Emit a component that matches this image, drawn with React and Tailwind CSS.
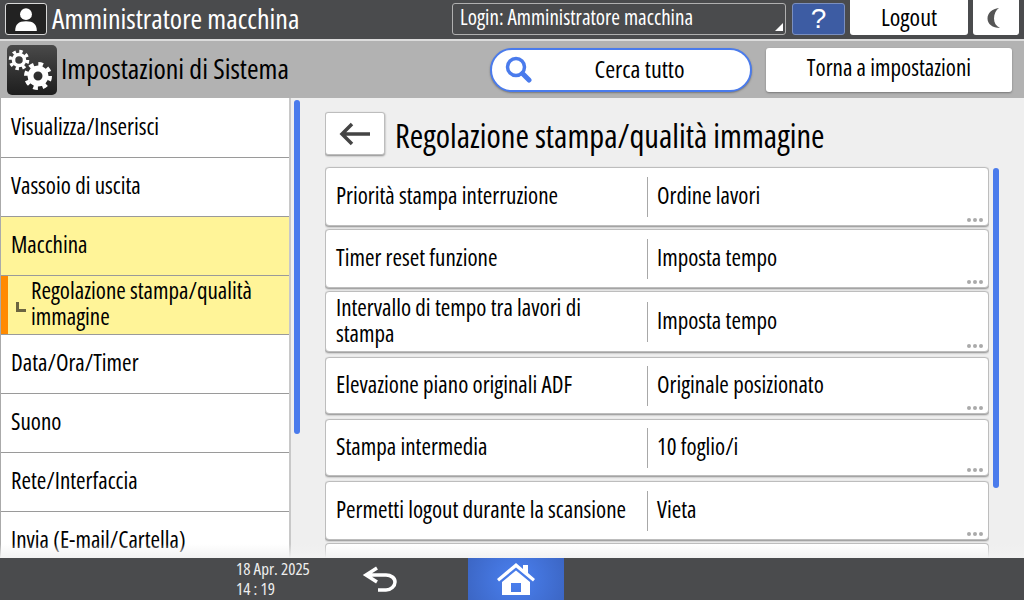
const font = "font-['Open_Sans',sans-serif] [font-stretch:condensed]";

const menuItems = [
  { label: "Visualizza/Inserisci" },
  { label: "Vassoio di uscita" },
  { label: "Macchina", active: true },
  { label: "Regolazione stampa/qualità immagine", sub: true },
  { label: "Data/Ora/Timer" },
  { label: "Suono" },
  { label: "Rete/Interfaccia" },
  { label: "Invia (E-mail/Cartella)" },
];

const settings = [
  { name: "Priorità stampa interruzione", value: "Ordine lavori", h: "h-[59px]" },
  { name: "Timer reset funzione", value: "Imposta tempo", h: "h-[59px]" },
  { name: "Intervallo di tempo tra lavori di stampa", value: "Imposta tempo", h: "h-[61px]", mb: "mb-[5px]" },
  { name: "Elevazione piano originali ADF", value: "Originale posizionato", h: "h-[57px]", mb: "mb-[5px]" },
  { name: "Stampa intermedia", value: "10 foglio/i", h: "h-[57px]", mb: "mb-[5px]" },
  { name: "Permetti logout durante la scansione", value: "Vieta", h: "h-[59px]" },
];

const GearsIcon = () => (
  <svg viewBox="0 0 50 50" className="w-[50px] h-[50px]">
    <circle cx="12" cy="15" r="5.500" fill="none" stroke="#fff" strokeWidth="3.500" />
    <circle cx="12" cy="15" r="8.500" fill="none" stroke="#fff" strokeWidth="3.500" strokeDasharray="3.340 3.340" />
    <circle cx="31" cy="31" r="7.500" fill="none" stroke="#fff" strokeWidth="6" />
    <circle cx="31" cy="31" r="12" fill="none" stroke="#fff" strokeWidth="4" strokeDasharray="4.710 4.710" />
  </svg>
);

const MenuRow = ({ item }) => {
  if (item.sub) {
    return (
      <div className="h-[59px] shrink-0 flex items-center bg-[#fff498] border-b border-[#9a9a9a] text-[23px] leading-[26px] text-black">
        <div className="w-[7px] h-full bg-[#ff8a00] shrink-0" />
        <svg viewBox="0 0 10 10" className="w-[10px] h-[10px] ml-[8px] mt-[4px] shrink-0">
          <path d="M1.500 0v8.500H10" fill="none" stroke="#6b6440" strokeWidth="3" />
        </svg>
        <span className="ml-[5px] w-[240px] pb-[4px]">{item.label}</span>
      </div>
    );
  }
  return (
    <div className={`h-[59px] shrink-0 flex items-center pl-[10px] pb-[4px] border-b border-[#9a9a9a] text-[23px] text-black ${item.active ? "bg-[#fff498]" : "bg-white"}`}>
      {item.label}
    </div>
  );
};

const SettingRow = ({ row }) => (
  <div className={`${row.h} ${row.mb || "mb-[3px]"} shrink-0 relative flex items-center bg-white rounded-[4px] border border-[#bdbdbd] shadow-[0_1px_2px_#8a8a8a] text-[23px] leading-[26px] text-black`}>
    <div className="w-[321px] shrink-0 pl-[10px] pb-[4px]">
      <span className="block w-[300px]">{row.name}</span>
    </div>
    <div className="h-[40px] border-l border-[#a8a8a8] pl-[9px] pb-[4px] flex items-center">{row.value}</div>
    <div className="absolute right-[5px] bottom-[3px] flex gap-[2px]">
      <span className="w-[4px] h-[4px] rounded-full bg-[#aaaaaa]" />
      <span className="w-[4px] h-[4px] rounded-full bg-[#aaaaaa]" />
      <span className="w-[4px] h-[4px] rounded-full bg-[#aaaaaa]" />
    </div>
  </div>
);

export default function App() {
  return (
    <div className={`w-[1024px] h-[600px] flex flex-col overflow-hidden bg-[#efefef] ${font}`}>
      {/* top bar */}
      <header className="h-[39px] shrink-0 flex items-start bg-[#4a4b4d] pl-[5px]">
        <div className="w-[42px] h-[32px] mt-[3px] rounded-[3px] border border-[#d8d8d8] bg-[#222] flex items-center justify-center">
          <svg viewBox="0 0 24 24" className="w-[26px] h-[26px]" fill="#fff">
            <circle cx="12" cy="7.500" r="5.500" />
            <path d="M2 23c0-6 3-9 10-9s10 3 10 9z" />
          </svg>
        </div>
        <div className="ml-[5px] text-[28px] leading-[36px] pb-[2px] text-white w-[400px]">Amministratore macchina</div>
        <div className="w-[334px] h-[32px] mt-[3px] relative rounded-[3px] border border-[#b0b0b0] pl-[7px] pb-[2px] flex items-center text-[21px] text-white">
          Login: Amministratore macchina
          <span className="absolute right-[2px] bottom-[3px] w-0 h-0 border-l-[8px] border-b-[8px] border-l-transparent border-b-white" />
        </div>
        <div className="w-[53px] h-[32px] mt-[3px] ml-[6px] rounded-[3px] border border-[#7a8fc0] bg-[#3d5ca3] flex items-center justify-center text-[28px] font-['Liberation_Sans',sans-serif] text-white">?</div>
        <div className="w-[118px] h-[35px] ml-[5px] pb-[1px] rounded-b-[3px] bg-white flex items-center justify-center text-[24px] text-black">Logout</div>
        <div className="w-[46px] h-[35px] ml-[5px] rounded-b-[3px] bg-white flex items-center justify-center">
          <svg viewBox="0 0 24 24" className="w-[24px] h-[24px]">
            <path d="M15 2C8 3 3.500 7 3.500 12.500S8.500 22 16 22c-4-2-6-5-6-9.500S12 4 15 2z" fill="#555" />
          </svg>
        </div>
      </header>
      <div className="h-[2px] shrink-0 bg-[#dcdcdc]" />

      {/* title bar */}
      <div className="h-[57px] shrink-0 flex items-center bg-[#b2b2b2] pl-[7px]">
        <div className="w-[50px] h-[50px] rounded-[5px] bg-gradient-to-b from-[#4a4a4a] to-[#1e1e1e]">
          <GearsIcon />
        </div>
        <div className="ml-[4px] w-[429px] pb-[4px] text-[28px] text-black">Impostazioni di Sistema</div>
        <div className="w-[262px] h-[44px] flex items-center rounded-full border-2 border-[#4a7bec] bg-white shadow-[0_1px_2px_#777] pl-[13px] text-[24px] text-black">
          <svg viewBox="0 0 27 27" className="w-[27px] h-[27px] shrink-0" fill="none" stroke="#4a7bec">
            <circle cx="11" cy="11" r="8.500" strokeWidth="3.500" />
            <path d="M17.500 17.500L24 24" strokeWidth="5" strokeLinecap="round" />
          </svg>
          <span className="w-[215px] pb-[2px] text-center">Cerca tutto</span>
        </div>
        <div className="w-[246px] h-[44px] ml-[14px] pb-[4px] rounded-[3px] bg-white shadow-[0_1px_2px_#777] flex items-center justify-center text-[23px] text-black">Torna a impostazioni</div>
      </div>

      {/* main */}
      <div className="flex-1 min-h-0 relative flex">
        <aside className="w-[291px] shrink-0 flex flex-col overflow-hidden bg-white border-l border-l-[#aaaaaa] border-r-2 border-r-[#c8c8c8] pt-[1px]">
          {menuItems.map((item) => (
            <MenuRow key={item.label} item={item} />
          ))}
        </aside>
        <div className="w-[6px] h-[334px] ml-[3px] mt-[2px] rounded-full bg-[#4a7bec] shrink-0" />

        <div className="w-[664px] ml-[25px] shrink-0 flex flex-col overflow-hidden">
          <div className="h-[69px] shrink-0 flex items-start pt-[14px]">
            <button className="w-[60px] h-[43px] rounded-[3px] border border-[#bdbdbd] bg-white shadow-[0_1px_2px_#8a8a8a] flex items-center justify-center">
              <svg viewBox="0 0 32 24" className="w-[32px] h-[24px]" fill="none" stroke="#444" strokeWidth="3.500">
                <path d="M31 12H3M13 2L3 12l10 10" />
              </svg>
            </button>
            <h1 className="ml-[10px] mt-[2px] text-[32.5px] leading-[44px] text-black">Regolazione stampa/qualità immagine</h1>
          </div>
          {settings.map((row) => (
            <SettingRow key={row.name} row={row} />
          ))}
          <div className="h-[15px] shrink-0 bg-white rounded-t-[4px] border border-b-0 border-[#bdbdbd]" />
        </div>
        <div className="w-[6px] h-[320px] ml-[4px] mt-[70px] rounded-full bg-[#4a7bec] shrink-0" />

        <div className="absolute left-0 right-0 bottom-0 h-[14px] bg-gradient-to-b from-transparent to-[#f2f2f2]" />
      </div>

      {/* bottom bar */}
      <footer className="h-[42px] shrink-0 flex items-stretch bg-[#4a4b4d]">
        <div className="w-[236px] shrink-0" />
        <div className="w-[110px] shrink-0 flex flex-col justify-center text-[17px] leading-[20px] text-[#eee]">
          <span>18 Apr. 2025</span>
          <span>14 : 19</span>
        </div>
        <div className="w-[122px] shrink-0 flex items-center">
          <svg viewBox="0 0 36 26" className="w-[36px] h-[26px] ml-[16px]" fill="none" stroke="#fff" strokeWidth="3.500">
            <path d="M15 2L4 9l11 7M4 9h20c5 0 9 3 9 7s-4 8-9 8h-8" />
          </svg>
        </div>
        <div className="w-[96px] shrink-0 bg-[radial-gradient(circle,#4a80f0,#3c66c4)] flex items-center justify-center">
          <svg viewBox="0 0 38 32" className="w-[38px] h-[32px]" fill="#fff">
            <path d="M19 0L0 16l2 2.500L19 4.500l17 14 2-2.500-7-6V2h-5v4z" />
            <path fillRule="evenodd" d="M5 19L19 7.500 33 19v13H5zM14 20v9h10v-9z" />
          </svg>
        </div>
      </footer>
    </div>
  );
}
